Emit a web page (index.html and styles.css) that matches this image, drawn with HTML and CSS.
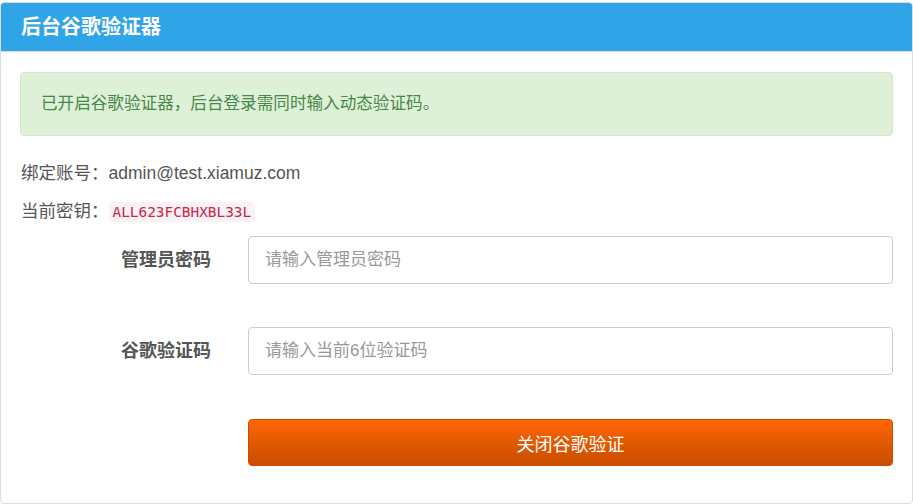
FILE: index.html
```html
<!DOCTYPE html>
<html lang="zh-CN">
<head>
<meta charset="utf-8">
<title>后台谷歌验证器</title>
<link rel="stylesheet" href="styles.css">
</head>
<body>
<div class="panel">
  <div class="panel-heading">后台谷歌验证器</div>
  <div class="panel-body">
    <div class="alert">已开启谷歌验证器，后台登录需同时输入动态验证码。</div>
    <p class="info">绑定账号：admin@test.xiamuz.com</p>
    <p class="info">当前密钥：<code class="secret">ALL623FCBHXBL33L</code></p>
    <form class="form">
      <label class="form-label" for="pwd">管理员密码</label>
      <input class="form-input" id="pwd" type="password" placeholder="请输入管理员密码">
      <label class="form-label" for="code">谷歌验证码</label>
      <input class="form-input" id="code" type="text" placeholder="请输入当前6位验证码">
      <span class="form-spacer"></span>
      <button class="btn-warning" type="button">关闭谷歌验证</button>
    </form>
  </div>
</div>
</body>
</html>
```
FILE: styles.css
```css
* { box-sizing: border-box; }
html, body { margin: 0; padding: 0; background: #fff; }
body {
  font-family: "Liberation Sans", Arial, "Noto Sans CJK SC", sans-serif;
  color: #555;
  font-size: 17px;
  line-height: 24px;
  padding-top: 2px;
}
.panel {
  width: 913px;
  height: 502px;
  border: 1px solid #ddd;
  border-radius: 4px;
  overflow: hidden;
}
.panel-heading {
  background: #2fa4e7;
  color: #fff;
  font-size: 20px;
  font-weight: bold;
  line-height: 28px;
  padding: 10px 20px 10px 20px;
  border-bottom: 1px solid #dddddd;
}
.panel-body {
  padding: 20px 19px 0 19px;
}
.alert {
  background: #dff0d8;
  border: 1px solid #d6e9c6;
  border-radius: 4px;
  color: #468847;
  padding: 19px 20px;
  line-height: 24px;
  font-size: 16.6px;
}
.info {
  margin: 0;
  padding-left: 1px;
  font-size: 17.5px;
}
.alert + .info { margin-top: 25px; }
.info + .info { margin-top: 14px; }
.secret {
  font-family: "DejaVu Sans Mono", "Liberation Mono", monospace;
  font-size: 14.4px;
  color: #c7254e;
  background: #f9f2f4;
  border-radius: 4px;
  padding: 2px 4px;
}
.form {
  margin-top: 12px;
  display: grid;
  grid-template-columns: 191px 1fr;
  column-gap: 37px;
  row-gap: 43px;
  align-items: center;
}
.form-label {
  text-align: right;
  font-weight: bold;
  font-size: 18px;
  color: #555;
}
.form-input {
  height: 48px;
  border: 1px solid #ccc;
  border-radius: 4px;
  padding: 0 16px;
  font-family: inherit;
  font-size: 17px;
  color: #555;
  outline: none;
}
.form-input::placeholder { color: #999; }
.btn-warning {
  height: 47px;
  margin-top: 1px;
  border: 1px solid #c94e00;
  border-radius: 4px;
  background: linear-gradient(#ff6707, #dd5600 60%, #c94e00);
  color: #fff;
  font-family: inherit;
  font-size: 18px;
}
```
